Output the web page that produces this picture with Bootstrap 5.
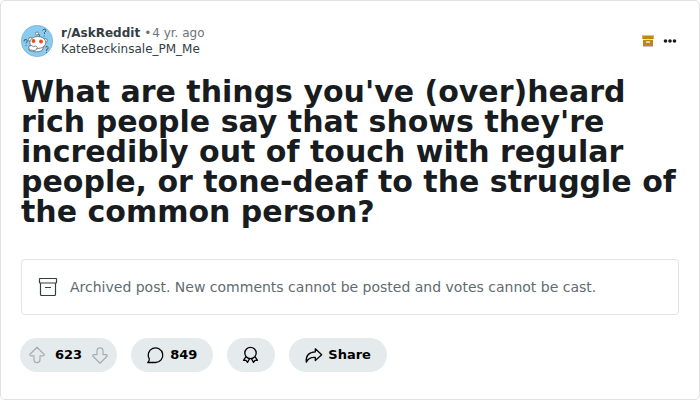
<!DOCTYPE html>
<html lang="en">
<head>
<meta charset="utf-8">
<meta name="viewport" content="width=device-width, initial-scale=1">
<title>r/AskReddit</title>
<link href="https://cdn.jsdelivr.net/npm/bootstrap@5.3.0/dist/css/bootstrap.min.css" rel="stylesheet">
<style>
  body { font-family: "DejaVu Sans", sans-serif; background: #fff; }
  .post { border: 1px solid #e1e1e1; border-radius: 5px; padding: 24px 20px 27px; }
  .meta { font-size: 12px; line-height: 16px; color: #6a7478; }
  .meta a { color: #333d42; }
  .meta .dot { margin: 0 1px 0 4px; }
  .post-tools { gap: 8px; padding-right: 1px; }
  .post-title { font-size: 30px; line-height: 30px; color: #181c1f; margin: 20px 0 32px; }
  .notice { border: 1px solid #e1e3e4; border-radius: 4px; padding: 16px; gap: 12px; font-size: 14px; line-height: 22px; color: #5f6c70; }
  .actions { gap: 14px; margin: 23px -1px 0; }
  .pill, .pill-group { height: 34px; border-radius: 17px; background: #e5ebed; color: #000; font-size: 13px; font-weight: 700; line-height: 20px; }
  .pill { border: 0; padding: 0 16px 0 15px; gap: 4px; }
  .pill:hover { background: #dbe4e9; }
  .pill-group { padding: 0 7px; }
  .plain { border: 0; background: transparent; padding: 0; color: #181c1f; }
  .vote { color: #a8adb0; }
  svg { display: block; }
</style>
<script src="https://cdn.jsdelivr.net/npm/bootstrap@5.3.0/dist/js/bootstrap.bundle.min.js" defer></script>
</head>
<body>
<article class="post">
  <header class="d-flex align-items-center gap-2">
    <svg width="32" height="32" viewBox="0 0 32 32" aria-hidden="true">
      <circle cx="16" cy="16" r="15.700" fill="#8acbf0" stroke="#6fa9cc" stroke-width=".6"/>
      <g fill="none" stroke="#4a5860" stroke-width="1">
        <path d="M21.500 5.500q1.500-2.500 3-1t-1 3v1.500M23.200 10.500v1"/>
        <path d="M3 16.500q0-2.500 2-2t1 2.500l-1 1.500M5 20v1"/>
        <path d="M24.500 22q2-1.500 2.500.500t-1.500 2v1.500M25.500 27v1"/>
      </g>
      <g fill="#fff" stroke="#5a686f" stroke-width=".8">
        <path d="M18.500 13V9.800L16.500 9" fill="none" stroke-width="1"/>
        <circle cx="16" cy="8.500" r="1.500"/>
        <circle cx="9.500" cy="14.500" r="2"/>
        <circle cx="24.500" cy="15.500" r="1.800"/>
        <path d="M9 20l-1 5q7 3.500 13 .5l2-4.500z"/>
        <ellipse cx="16.800" cy="17.500" rx="8" ry="6"/>
        <path d="M7.500 21.500q3-2 5 0 2.500-1.500 4 1l-2 3-6-.5z"/>
      </g>
      <circle cx="12.500" cy="16" r="1.900" fill="#ee4b25"/>
      <circle cx="20" cy="16.500" r="1.900" fill="#ee4b25"/>
    </svg>
    <div class="meta flex-grow-1">
      <div><a href="#" class="fw-bold text-decoration-none">r/AskReddit</a><span class="dot">•</span><time>4 yr. ago</time></div>
      <div><a href="#" class="text-decoration-none">KateBeckinsale_PM_Me</a></div>
    </div>
    <div class="post-tools d-flex align-items-center">
      <svg width="12" height="12" viewBox="0 0 12 12" role="img" aria-label="Archived">
        <path d="M0 0h12v1H0zM1 11h10v1H1z" fill="#c6c5c1"/>
        <path d="M1 1h10v3H1zM1 5h10v6H1z" fill="#bb8a0c"/>
        <path d="M0 1h1v3H0zM11 1h1v3h-1z" fill="#cfac55"/>
        <path d="M1 4h10v1H1z" fill="#eee5cc"/>
        <path d="M4 6h4v2H4z" fill="#d2d0c8"/>
      </svg>
      <button class="plain" type="button" aria-label="More options">
        <svg width="16" height="16" viewBox="0 0 16 16" fill="currentColor"><circle cx="3.500" cy="8" r="1.800"/><circle cx="8" cy="8" r="1.800"/><circle cx="12.500" cy="8" r="1.800"/></svg>
      </button>
    </div>
  </header>

  <h1 class="post-title fw-bold">What are things you've (over)heard rich people say that shows they're incredibly out of touch with regular people, or tone-deaf to the struggle of the common person?</h1>

  <div class="notice d-flex align-items-center">
    <svg width="20" height="20" viewBox="0 0 20 20" fill="none" stroke="#333d42" stroke-width="1.200" stroke-linejoin="round" aria-hidden="true">
      <rect x="1.500" y="1.500" width="17" height="4.500" rx=".5"/>
      <path d="M2.500 6v11.500q0 1 1 1h13q1 0 1-1V6M7 10.500h6"/>
    </svg>
    <span>Archived post. New comments cannot be posted and votes cannot be cast.</span>
  </div>

  <div class="actions d-flex flex-wrap">
    <div class="pill-group d-inline-flex align-items-center gap-2">
      <button class="plain vote" type="button" aria-label="Upvote">
        <svg width="20" height="20" viewBox="0 0 20 20" fill="none" stroke="currentColor" stroke-width="1.200" stroke-linejoin="round"><path d="M10 2.300L17 9.200q.7 1.300-.8 1.600H13v4.200q-.3 2.700-3 2.700t-3-2.700v-4.200H3.800q-1.500-.3-.8-1.600z"/></svg>
      </button>
      <span>623</span>
      <button class="plain vote" type="button" aria-label="Downvote">
        <svg width="20" height="20" viewBox="0 0 20 20" fill="none" stroke="currentColor" stroke-width="1.200" stroke-linejoin="round"><path d="M10 18.200L17 11.300q.7-1.300-.8-1.600H13V5.500q-.3-2.700-3-2.700t-3 2.700v4.200H3.800q-1.500.3-.8 1.600z"/></svg>
      </button>
    </div>
    <button class="pill d-inline-flex align-items-center" type="button">
      <svg width="20" height="20" viewBox="0 0 20 20" fill="none" stroke="currentColor" stroke-width="1.300" stroke-linejoin="round" aria-hidden="true"><path d="M1.800 17.500H9.500A7.300 7.300 0 1 0 3.300 14.100Q3.400 15.800 1.800 17.500z"/></svg>
      <span>849</span>
    </button>
    <button class="pill d-inline-flex align-items-center" type="button" aria-label="Give award">
      <svg width="17" height="20" viewBox="0 0 17 20" fill="none" stroke="currentColor" stroke-width="1.300" stroke-linejoin="round"><circle cx="8.500" cy="8" r="5.700"/><path d="M4 11.700L1.500 15.300l2.500.1 1.500 2 2-3.600M13 11.700l2.500 3.600-2.500.1-1.500 2-2-3.600"/></svg>
    </button>
    <button class="pill d-inline-flex align-items-center" type="button">
      <svg width="20" height="20" viewBox="0 0 20 20" fill="none" stroke="currentColor" stroke-width="1.300" stroke-linejoin="round" aria-hidden="true"><path d="M11.300 3.800L17.700 9.700l-6.400 5.800v-3Q5 12 2.300 17.200 1.300 7.500 11.300 6.900z"/></svg>
      <span>Share</span>
    </button>
  </div>
</article>
</body>
</html>
